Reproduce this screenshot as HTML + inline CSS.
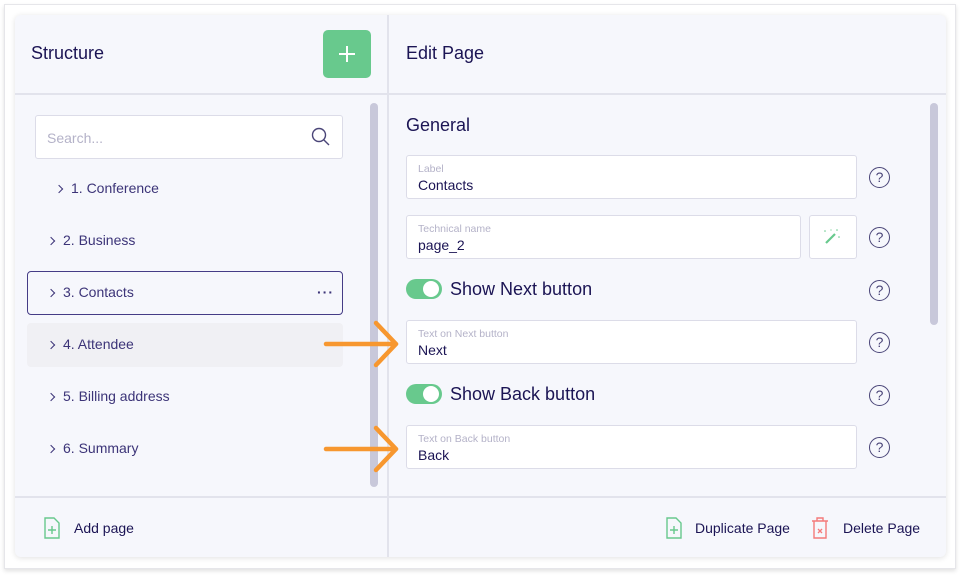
<!DOCTYPE html>
<html><head><style>
*{box-sizing:border-box;margin:0;padding:0}
body{width:960px;height:575px;background:#fff;font-family:"Liberation Sans",sans-serif;color:#1b1454;position:relative;overflow:hidden}
.a{position:absolute}
.frame{left:4px;top:4px;width:952px;height:565px;border:1px solid #e6e6ea;box-shadow:0 2px 4px rgba(0,0,0,.12)}
.card{left:15px;top:15px;width:931px;height:542px;background:#f6f7fc;border-radius:6px;box-shadow:0 1px 6px rgba(0,0,0,.12)}
.hl{height:2px;background:#e2e3ec}
.vl{width:2px;background:#e2e3ec}
.t{font-size:18px;color:#1b1454}
.item{font-size:14px;color:#3c3478}
.field{background:#fff;border:1px solid #dcdce8;border-radius:3px}
.lab{position:absolute;left:11px;top:7px;font-size:10.5px;color:#b4b2c8}
.val{position:absolute;left:11px;top:21px;font-size:14px;color:#1b1454}
.help{width:21px;height:21px;border:1.5px solid #4a4578;border-radius:50%;font-size:14px;line-height:18px;text-align:center;color:#4a4578}
.tog{width:36px;height:20px;border-radius:10px;background:#68c98d}
.tog:after{content:"";position:absolute;right:3px;top:2px;width:16px;height:16px;border-radius:50%;background:#fff}
.sb{width:8px;border-radius:4px;background:#c8c8da}
.foot{font-size:14px;color:#1b1454}
.chev{display:inline-block;width:6px;height:6px;border-right:1.5px solid #3c3478;border-top:1.5px solid #3c3478;transform:rotate(45deg);margin-right:9px;position:relative;top:-1px}
</style></head><body>
<div class="a frame"></div>
<div class="a card"></div>
<div class="a vl" style="left:387px;top:15px;height:542px"></div>
<div class="a hl" style="left:15px;top:93px;width:931px"></div>
<div class="a hl" style="left:15px;top:496px;width:931px"></div>

<div class="a t" style="left:31px;top:43px">Structure</div>
<div class="a" style="left:323px;top:30px;width:48px;height:48px;background:#68c98d;border-radius:5px"></div>
<div class="a" style="left:339px;top:53px;width:16px;height:2px;background:#fff"></div>
<div class="a" style="left:346px;top:46px;width:2px;height:16px;background:#fff"></div>
<div class="a t" style="left:406px;top:43px">Edit Page</div>

<div class="a field" style="left:35px;top:115px;width:308px;height:44px"></div>
<div class="a" style="left:47px;top:130px;font-size:14px;color:#b4b2c8">Search...</div>
<svg class="a" style="left:311px;top:127px" width="20" height="20" viewBox="0 0 20 20"><circle cx="8" cy="8" r="6.5" fill="none" stroke="#4a4578" stroke-width="1.4"/><line x1="12.7" y1="12.7" x2="18" y2="18" stroke="#4a4578" stroke-width="1.4"/></svg>

<div class="a item" style="left:56px;top:180px"><span class="chev"></span>1. Conference</div>
<div class="a item" style="left:48px;top:232px"><span class="chev"></span>2. Business</div>
<div class="a" style="left:27px;top:271px;width:316px;height:44px;border:1px solid #453c86;border-radius:4px"></div>
<div class="a item" style="left:48px;top:284px"><span class="chev"></span>3. Contacts</div>
<div class="a item" style="left:317px;top:284px;font-weight:bold;letter-spacing:1px">···</div>
<div class="a" style="left:27px;top:323px;width:316px;height:44px;background:#f0f0f4;border-radius:4px"></div>
<div class="a item" style="left:48px;top:336px"><span class="chev"></span>4. Attendee</div>
<div class="a item" style="left:48px;top:388px"><span class="chev"></span>5. Billing address</div>
<div class="a item" style="left:48px;top:440px"><span class="chev"></span>6. Summary</div>
<div class="a sb" style="left:370px;top:103px;height:384px"></div>

<div class="a t" style="left:406px;top:115px">General</div>
<div class="a field" style="left:406px;top:155px;width:451px;height:44px"><span class="lab">Label</span><span class="val">Contacts</span></div>
<div class="a help" style="left:869px;top:167px">?</div>
<div class="a field" style="left:406px;top:215px;width:395px;height:44px"><span class="lab">Technical name</span><span class="val">page_2</span></div>
<div class="a field" style="left:809px;top:215px;width:48px;height:44px"></div>
<svg class="a" style="left:822px;top:228px" width="20" height="18" viewBox="0 0 20 18"><line x1="4" y1="15" x2="13" y2="6" stroke="#68c98d" stroke-width="2.2"/><circle cx="3" cy="3" r=".8" fill="#68c98d"/><circle cx="15" cy="2" r=".8" fill="#68c98d"/><circle cx="17" cy="9" r=".8" fill="#68c98d"/><circle cx="9" cy="2" r=".6" fill="#68c98d"/></svg>
<div class="a help" style="left:869px;top:227px">?</div>
<div class="a tog" style="left:406px;top:279px"></div>
<div class="a t" style="left:450px;top:279px">Show Next button</div>
<div class="a help" style="left:869px;top:280px">?</div>
<div class="a field" style="left:406px;top:320px;width:451px;height:44px"><span class="lab">Text on Next button</span><span class="val">Next</span></div>
<div class="a help" style="left:869px;top:332px">?</div>
<div class="a tog" style="left:406px;top:384px"></div>
<div class="a t" style="left:450px;top:384px">Show Back button</div>
<div class="a help" style="left:869px;top:385px">?</div>
<div class="a field" style="left:406px;top:425px;width:451px;height:44px"><span class="lab">Text on Back button</span><span class="val">Back</span></div>
<div class="a help" style="left:869px;top:437px">?</div>
<div class="a sb" style="left:930px;top:103px;height:222px"></div>

<svg class="a" style="left:320px;top:318px" width="82" height="160" viewBox="0 0 82 160"><g stroke="#f7972f" stroke-width="4.5" fill="none" stroke-linecap="round" stroke-linejoin="round"><path d="M6 26H76M56 5L76 26L56 47"/><path d="M6 131H76M56 110L76 131L56 152"/></g></svg>

<svg class="a" style="left:44px;top:517px" width="16" height="22" viewBox="0 0 16 22"><path d="M1 1H10L15 6V21H1Z" fill="none" stroke="#68c98d" stroke-width="1.4"/><path d="M8 9V17M4 13H12" stroke="#68c98d" stroke-width="1.4"/></svg>
<div class="a foot" style="left:74px;top:520px">Add page</div>
<svg class="a" style="left:666px;top:517px" width="16" height="22" viewBox="0 0 16 22"><path d="M1 1H10L15 6V21H1Z" fill="none" stroke="#68c98d" stroke-width="1.4"/><path d="M8 9V17M4 13H12" stroke="#68c98d" stroke-width="1.4"/></svg>
<div class="a foot" style="left:695px;top:520px">Duplicate Page</div>
<svg class="a" style="left:811px;top:517px" width="18" height="22" viewBox="0 0 18 22"><path d="M1 4H17M6 4V1H12V4M3 4V21H15V4" fill="none" stroke="#f47a7a" stroke-width="1.4"/><path d="M7 12L11 16M11 12L7 16" stroke="#f47a7a" stroke-width="1.3"/></svg>
<div class="a foot" style="left:843px;top:520px">Delete Page</div>
</body></html>
